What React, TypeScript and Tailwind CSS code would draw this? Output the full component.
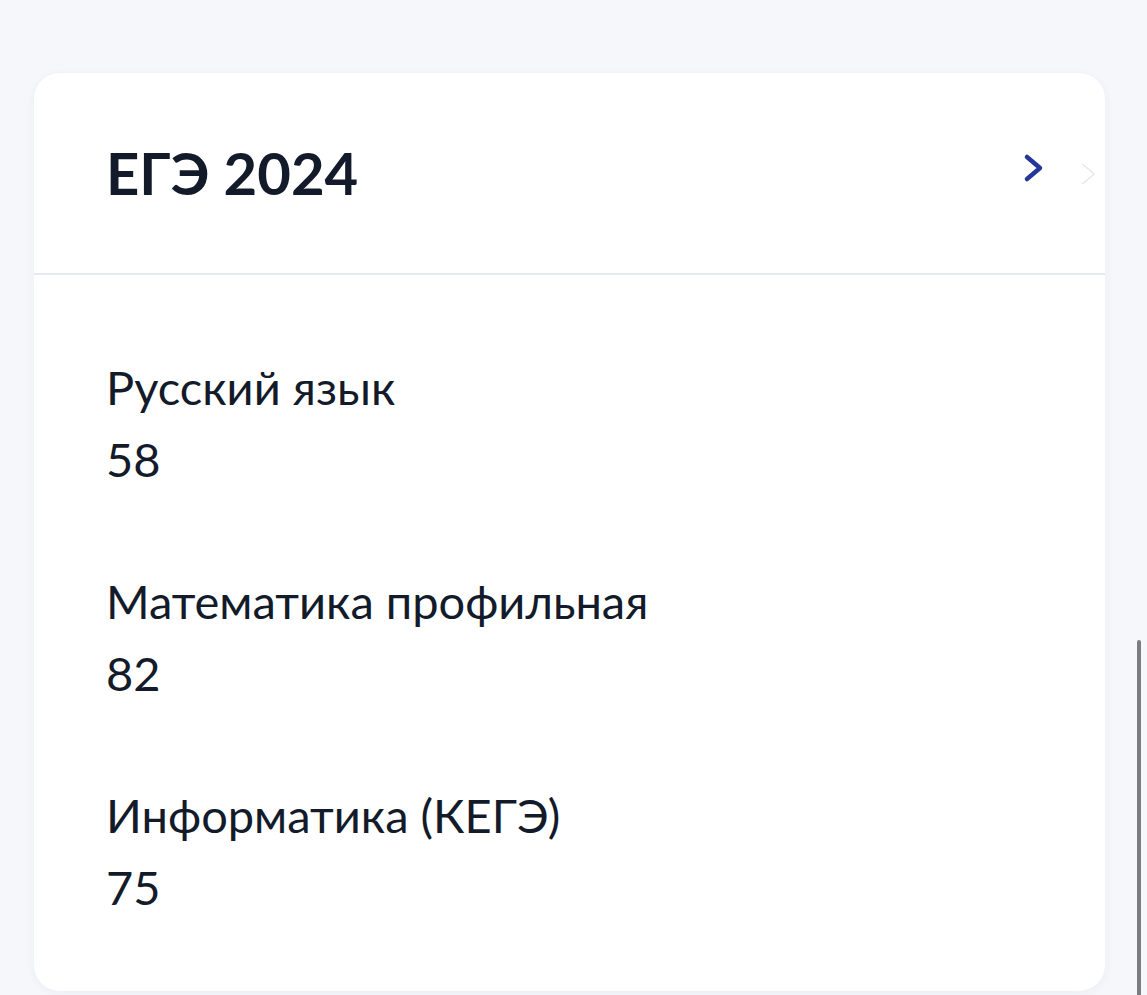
const results = [
  { subject: 'Русский язык', score: 58 },
  { subject: 'Математика профильная', score: 82 },
  { subject: 'Информатика (КЕГЭ)', score: 75 },
];

function Chevron({ className, width }: { className: string; width: number }) {
  return (
    <svg viewBox="0 0 24 34" className={className} fill="none" stroke="currentColor" strokeWidth={width} strokeLinecap="round" strokeLinejoin="round">
      <polyline points="6,6 19,17 6,28" />
    </svg>
  );
}

export default function App() {
  return (
    <div
      className="relative h-[995px] overflow-hidden bg-[#f5f7fb] pt-[73px] pl-[34px] pr-[42px]"
      style={{ fontFamily: 'Lato, "Noto Sans", sans-serif' }}
    >
      <div className="bg-white rounded-[26px] shadow-[0_2px_10px_rgba(30,50,90,0.05)] text-[#131b2b]">
        {/* Header */}
        <div className="flex items-center justify-between h-[202px] pl-[72px] pr-[6px] border-b-2 border-[#e6e9ee]">
          <h1 className="text-[58px] font-bold leading-none">ЕГЭ 2024</h1>
          <div className="flex items-center gap-[32px]">
            <Chevron className="w-[24px] h-[34px] -mt-[10px] text-[#24389a]" width={4.5} />
            <Chevron className="w-[22px] h-[30px] mt-[2px] text-[#e4e6ea]" width={1.5} />
          </div>
        </div>

        {/* Results */}
        <div className="flex flex-col gap-[70px] pl-[72px] pt-[76px] pb-[68px]">
          {results.map((r) => (
            <div key={r.subject} className="text-[47px] leading-[72px]">
              <p>{r.subject}</p>
              <p>{r.score}</p>
            </div>
          ))}
        </div>
      </div>

      {/* scrollbar thumb */}
      <div className="absolute right-[6px] top-[640px] w-[4px] h-[360px] rounded-full bg-[#7b7c80]" />
    </div>
  );
}
